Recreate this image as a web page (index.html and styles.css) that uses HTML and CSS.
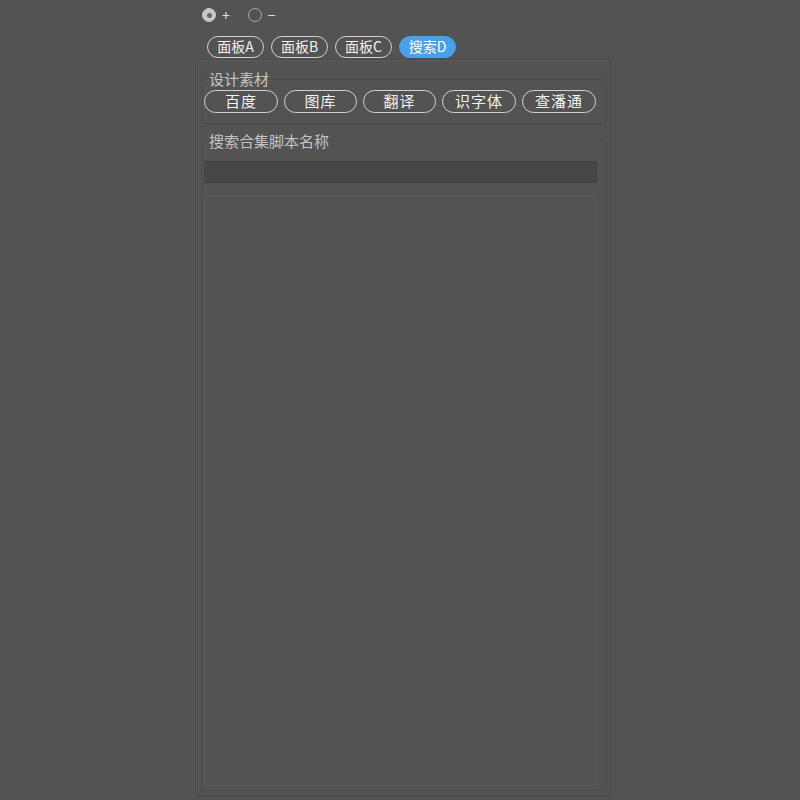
FILE: index.html
```html
<!DOCTYPE html>
<html lang="zh">
<head>
<meta charset="utf-8">
<link rel="stylesheet" href="styles.css">
</head>
<body>
<div class="app">
  <div class="radios">
    <label class="radio"><span class="dot on"></span><span class="rl">+</span></label>
    <label class="radio"><span class="dot"></span><span class="rl">−</span></label>
  </div>
  <div class="tabs">
    <span class="tab">面板A</span>
    <span class="tab">面板B</span>
    <span class="tab">面板C</span>
    <span class="tab active">搜索D</span>
  </div>
  <div class="panel">
    <fieldset class="group g1">
      <legend>设计素材</legend>
      <div class="btns">
        <span class="btn">百度</span>
        <span class="btn">图库</span>
        <span class="btn">翻译</span>
        <span class="btn">识字体</span>
        <span class="btn">查潘通</span>
      </div>
    </fieldset>
    <fieldset class="group g2">
      <legend>搜索合集脚本名称</legend>
      <div class="input"></div>
      <div class="list"></div>
    </fieldset>
  </div>
</div>
</body>
</html>
```
FILE: styles.css
```css
html, body {
  margin: 0;
  padding: 0;
  background: #535353;
  height: 800px;
  overflow: hidden;
}
.app {
  margin-left: 197px;
  width: 414px;
  font-family: "Noto Sans CJK SC", "DejaVu Sans", sans-serif;
  color: #e6e6e6;
}
.radios {
  display: flex;
  gap: 18px;
  padding: 6px 0 0 5px;
  height: 18px;
  align-items: center;
}
.radio {
  display: flex;
  align-items: center;
  gap: 6px;
  font-size: 14px;
  color: #e0e0e0;
}
.dot {
  box-sizing: border-box;
  width: 14px;
  height: 14px;
  border-radius: 50%;
  border: 1.5px solid #a8a8a8;
  background: #535353;
  display: flex;
  align-items: center;
  justify-content: center;
}
.dot.on {
  background: #c8c8c8;
  border-color: #c8c8c8;
}
.dot.on::after {
  content: "";
  width: 5px;
  height: 5px;
  border-radius: 50%;
  background: #6a6a6a;
}
.rl { line-height: 14px; }
.tabs {
  display: flex;
  gap: 7px;
  margin-top: 12px;
  padding-left: 10px;
  height: 22px;
}
.tab {
  box-sizing: border-box;
  width: 57px;
  height: 22px;
  border: 1.5px solid #d0d0d0;
  border-radius: 11px;
  font-size: 14px;
  line-height: 19px;
  text-align: center;
  color: #f0f0f0;
}
.tab.active {
  background: #4aa0ec;
  border-color: #4aa0ec;
  color: #ffffff;
}
.panel {
  box-sizing: border-box;
  margin-top: 1px;
  height: 737px;
  border: 1px solid #4a4a4a;
  box-shadow: inset 1px 1px 0 #5a5a5a;
  padding: 11px 4px 4px 4px;
  display: flex;
  flex-direction: column;
  gap: 9px;
}
.group {
  margin: 0;
  border: 1px solid #4b4b4b;
  box-shadow: inset 1px 1px 0 #595959;
  padding: 0;
  min-width: 0;
}
.group legend {
  padding: 0;
  margin-left: 5px;
  font-size: 15px;
  color: #c4c4c4;
  line-height: 16px;
}
.g1 {
  height: 48px;
  padding: 3px 0 0 1px;
}
.btns {
  display: flex;
  gap: 6px;
}
.btn {
  box-sizing: border-box;
  width: 74px;
  height: 23px;
  border: 1.5px solid #d0d0d0;
  border-radius: 12px;
  font-size: 15px;
  line-height: 20px;
  text-align: center;
  color: #f2f2f2;
  letter-spacing: 1px;
}
.btn:nth-child(2), .btn:nth-child(3) { width: 73px; }
.g2 {
  flex: 1;
  padding: 12px 8px 4px 1px;
  display: flex;
  flex-direction: column;
  gap: 12px;
}
.input {
  height: 22px;
  box-sizing: border-box;
  background: #474747;
  border: 1px solid #3f3f3f;
  border-radius: 2px;
}
.list {
  flex: 1;
  box-sizing: border-box;
  border: 1px solid #5b5b5b;
  border-radius: 3px;
  background: #545454;
}
```
